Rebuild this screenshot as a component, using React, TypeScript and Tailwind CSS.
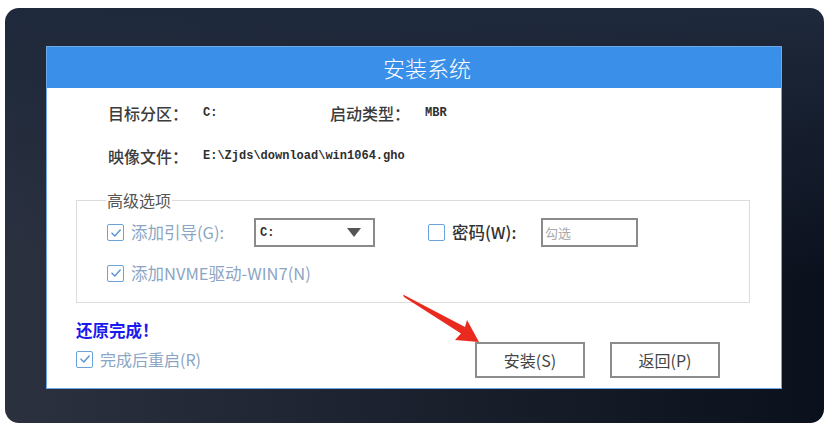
const cjk = "font-['Noto_Sans_CJK_SC','Noto_Sans',sans-serif]"
const mono = "font-['Liberation_Mono','DejaVu_Sans_Mono',monospace]"

const CheckBox = ({ checked = false }: { checked?: boolean }) => {
  return (
    <div className="flex h-[17px] w-[17px] flex-shrink-0 items-center justify-center rounded-[2px] border-[1.5px] border-[#6aa2dc] bg-white">
      {checked && (
        <svg width="12" height="12" viewBox="0 0 12 12" fill="none">
          <path
            d="M2 6.2 L4.8 9 L10.2 3"
            stroke="#5f9ad6"
            strokeWidth="1.6"
            strokeLinecap="round"
            strokeLinejoin="round"
          />
        </svg>
      )}
    </div>
  )
}

const InfoItem = ({
  label,
  value,
  valueWidth,
}: {
  label: string
  value: string
  valueWidth?: string
}) => {
  return (
    <div className="flex items-center">
      <div className="w-[95px] text-[16px] leading-[20px] font-medium text-[#3b3b3b]">
        {label}
      </div>
      <div
        className={`${mono} ${valueWidth ?? ''} text-[12px] font-bold text-[#2e2e2e]`}
      >
        {value}
      </div>
    </div>
  )
}

const Arrow = () => {
  return (
    <svg
      className="pointer-events-none absolute top-0 left-0"
      width="830"
      height="429"
      viewBox="0 0 830 429"
    >
      <polygon
        points="403,294.5 465,327 467,320 479,342 455,340 461,333.5 404,297"
        fill="#ea2a1f"
      />
    </svg>
  )
}

export default function App() {
  return (
    <div className={`${cjk} relative h-[429px] w-[830px] bg-white pt-[8px] pl-[5px]`}>
      <div className="h-[415px] w-[819px] rounded-[14px] bg-[linear-gradient(to_bottom,#1e293b_0%,rgba(30,41,59,0)_65%),linear-gradient(to_right,#2c313f,#0b101d)] pt-[38px] pl-[41px]">
        <div className="flex h-[343px] w-[736px] flex-col border border-[#6ea8e6] bg-white">
          <div className="flex h-[41px] items-center justify-center bg-[#3a8fe9] pl-[26px] text-[22px] font-light text-white">
            安装系统
          </div>

          <div className="flex flex-col pt-[15px] pl-[61px]">
            <div className="flex items-center">
              <InfoItem label="目标分区：" value="C:" valueWidth="w-[127px]" />
              <InfoItem label="启动类型：" value="MBR" />
            </div>
            <div className="mt-[23px] flex items-center">
              <InfoItem label="映像文件：" value="E:\Zjds\download\win1064.gho" />
            </div>
          </div>

          <div className="mt-[34px] ml-[29px] flex flex-col">
            <div className="relative w-[674px] border border-[#dcdcdc] pt-[17px] pb-[19px] pl-[30px]">
              <div className="absolute -top-[11px] left-[29px] bg-white px-[1px] text-[16px] leading-[20px] text-[#555]">
                高级选项
              </div>
              <div className="flex items-center">
                <div className="flex w-[147px] items-center gap-[7px]">
                  <CheckBox checked />
                  <span className="text-[16.5px] text-[#8ba5c4]">添加引导(G):</span>
                </div>
                <div className="flex h-[29px] w-[121px] items-center justify-between border-2 border-[#8a8a8a] pr-[12px] pl-[4px]">
                  <span className={`${mono} text-[12px] font-bold text-[#333]`}>C:</span>
                  <svg width="14" height="9" viewBox="0 0 14 9">
                    <polygon points="0,0 14,0 7,9" fill="#555" />
                  </svg>
                </div>
                <div className="ml-[53px] flex w-[113px] items-center gap-[7px]">
                  <CheckBox />
                  <span className="text-[16.5px] font-medium text-[#333]">密码(W):</span>
                </div>
                <div className="flex h-[29px] w-[97px] items-center border-2 border-[#8a8a8a] pl-[2px] text-[13px] text-[#aaa]">
                  勾选
                </div>
              </div>
              <div className="mt-[16px] flex items-center gap-[7px]">
                <CheckBox checked />
                <span className="text-[16.5px] leading-[20px] text-[#8ba5c4]">
                  添加NVME驱动-WIN7(N)
                </span>
              </div>
            </div>

            <div className="mt-[17px] flex">
              <div className="flex w-[399px] flex-col">
                <div className="text-[16.5px] leading-[20px] font-bold text-[#1a1aef]">
                  还原完成！
                </div>
                <div className="mt-[9px] flex items-center gap-[7px]">
                  <CheckBox checked />
                  <span className="text-[16px] leading-[20px] text-[#8ba5c4]">
                    完成后重启(R)
                  </span>
                </div>
              </div>
              <div className="mt-[22px] flex gap-[25px]">
                <button className="flex h-[36px] w-[110px] items-center justify-center border-2 border-[#8c8c8c] bg-white text-[16px] text-[#444]">
                  安装(S)
                </button>
                <button className="flex h-[36px] w-[110px] items-center justify-center border-2 border-[#8c8c8c] bg-white text-[16px] text-[#444]">
                  返回(P)
                </button>
              </div>
            </div>
          </div>
        </div>
      </div>
      <Arrow />
    </div>
  )
}
